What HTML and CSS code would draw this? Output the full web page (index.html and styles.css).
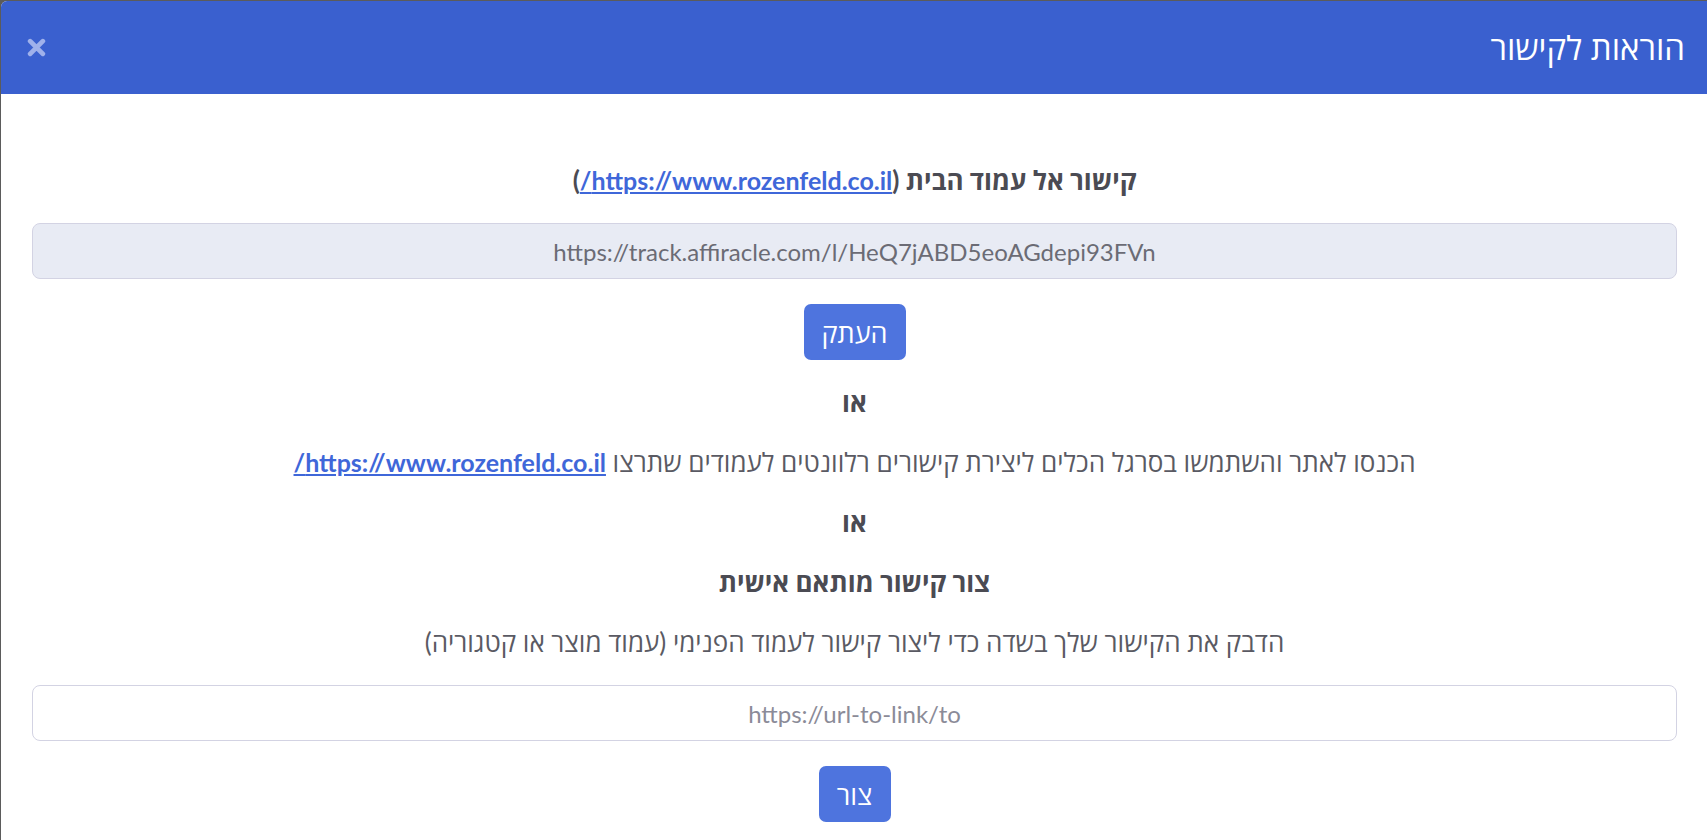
FILE: index.html
```html
<!DOCTYPE html>
<html lang="he">

<head>
    <meta charset="UTF-8">
    <meta name="viewport" content="width=device-width, initial-scale=1.0">
    <title>הוראות לקישור</title>
    <link rel="stylesheet" href="styles.css">
</head>

<body>
    <div class="modal">
        <div class="modal-header">
            <button class="modal-close" aria-label="close">
                <svg width="19" height="19" viewBox="0 0 18 18">
                    <path d="M3 3 L15 15 M15 3 L3 15" stroke="currentColor" stroke-width="4.5" stroke-linecap="round" fill="none"/>
                </svg>
            </button>
            <h1 class="modal-title" dir="rtl">הוראות לקישור</h1>
        </div>

        <div class="modal-body" dir="rtl">
            <p class="line strong">קישור אל עמוד הבית (<a href="#" class="link">https://www.rozenfeld.co.il/</a>)</p>
            <input class="field field-readonly" type="text" dir="ltr" readonly value="https://track.affiracle.com/l/HeQ7jABD5eoAGdepi93FVn">
            <button class="btn btn-copy">העתק</button>

            <p class="line strong">או</p>
            <p class="line">הכנסו לאתר והשתמשו בסרגל הכלים ליצירת קישורים רלוונטים לעמודים שתרצו <a href="#" class="link">https://www.rozenfeld.co.il/</a></p>
            <p class="line strong">או</p>
            <p class="line strong">צור קישור מותאם אישית</p>
            <p class="line">הדבק את הקישור שלך בשדה כדי ליצור קישור לעמוד הפנימי (עמוד מוצר או קטגוריה)</p>

            <input class="field" type="text" dir="ltr" placeholder="https://url-to-link/to">
            <button class="btn btn-create">צור</button>
        </div>
    </div>
</body>
</html>
```

FILE: styles.css
```css
html, body {
    margin: 0;
    height: 100%;
    overflow: hidden;
}

body {
    background-color: #5b5b5b;
    font-family: Lato, "Open Sans", sans-serif;
}

.modal {
    margin: 1px 0 0 1px;
    height: 100%;
    background-color: white;
    border-top-left-radius: 6px;
    overflow: hidden;
}

.modal-header {
    height: 93px;
    background-color: #3a60cf;
    display: flex;
    align-items: center;
    justify-content: space-between;
    padding: 0 22px 0 23px;
}

.modal-close {
    width: 24px;
    height: 24px;
    padding: 0;
    border: none;
    background: transparent;
    color: #9fb1eb;
    display: flex;
    align-items: center;
    justify-content: center;
}

.modal-title {
    margin: 0;
    color: white;
    font-family: "Open Sans", sans-serif;
    font-size: 33px;
    font-weight: 400;
}

.modal-body {
    padding: 71px 30px 0 31px;
    display: flex;
    flex-direction: column;
    align-items: center;
    text-align: center;
}

.line {
    margin: 0 0 30px;
    line-height: 30px;
    font-size: 26px;
    color: #5a5a63;
}

.strong {
    font-weight: 700;
    color: #4b4b53;
}

.link {
    color: #3f67d9;
    font-weight: 700;
    font-size: 25px;
}

.field {
    box-sizing: border-box;
    width: 100%;
    height: 56px;
    margin-top: -2px;
    border: 1px solid #d3d3e3;
    border-radius: 8px;
    background-color: white;
    font-family: Lato, "Open Sans", sans-serif;
    font-size: 24px;
    text-align: center;
    color: #6b6b75;
    outline: none;
}

.field::placeholder {
    color: #8b8b98;
}

.field-readonly {
    background-color: #e8ebf4;
}

.btn {
    height: 56px;
    margin: 25px 0 0;
    border: none;
    border-radius: 7px;
    background-color: #4e74de;
    color: white;
    font-family: "Open Sans", sans-serif;
    font-size: 27px;
    padding: 0;
}

.btn-copy {
    width: 102px;
    margin-bottom: 27px;
}

.btn-create {
    width: 72px;
}
```
